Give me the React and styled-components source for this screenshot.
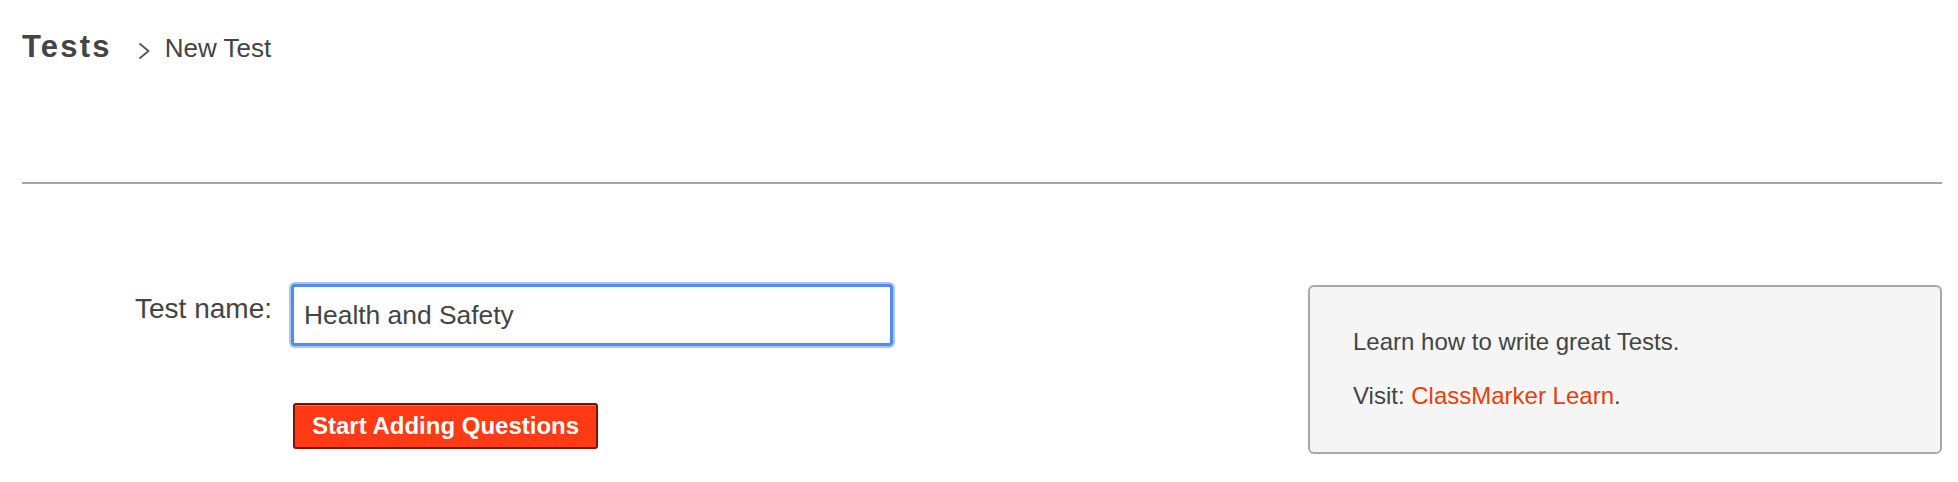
import React from "react";
import styled, { createGlobalStyle } from "styled-components";

const GlobalStyle = createGlobalStyle`
  html, body { margin: 0; padding: 0; background: #ffffff; }
  body { font-family: "Liberation Sans", Arial, Helvetica, sans-serif; color: #444444; }
`;

const Page = styled.div`
  padding: 0 16px 0 22px;
`;

const Header = styled.header`
  display: flex;
  align-items: baseline;
  padding-top: 29px;
  height: 182px;
  box-sizing: border-box;
`;

const Title = styled.h1`
  margin: 0;
  font-size: 31px;
  line-height: 36px;
  font-weight: 700;
  letter-spacing: 2.2px;
  color: #444444;
`;

const Crumb = styled.span`
  display: inline-flex;
  align-items: baseline;
  margin-left: 26px;
  font-size: 26px;
  color: #444444;
  gap: 15px;
`;

const Chevron = styled.svg`
  width: 12px;
  height: 18px;
  align-self: center;
  position: relative;
  top: 2px;
`;

const Divider = styled.hr`
  margin: 0;
  border: 0;
  height: 2px;
  background: #a6a6a6;
`;

const Main = styled.section`
  display: flex;
  justify-content: space-between;
  align-items: flex-start;
  padding-top: 100px;
`;

const Form = styled.form`
  display: grid;
  grid-template-columns: 250px 602px;
  column-gap: 19px;
  row-gap: 57px;
  margin: 0;
`;

const Label = styled.label`
  text-align: right;
  font-size: 28px;
  line-height: 30px;
  padding-top: 10px;
  color: #444444;
`;

const TextInput = styled.input`
  box-sizing: border-box;
  width: 602px;
  height: 62px;
  border: 3px solid #538be8;
  border-radius: 4px;
  box-shadow: 0 0 0 2px rgba(130, 172, 242, 0.7);
  padding: 0 10px;
  font-family: "Liberation Sans", Arial, Helvetica, sans-serif;
  font-size: 26.4px;
  color: #444444;
  background: #ffffff;
  outline: none;
`;

const Button = styled.button`
  grid-column: 2;
  justify-self: start;
  margin-left: 2px;
  box-sizing: border-box;
  height: 46px;
  padding: 0 17px;
  border: 2px solid #7c1405;
  border-radius: 3px;
  background: #ff3a14;
  box-shadow: inset 0 1px 0 rgba(255, 140, 110, 0.6);
  color: #ffffff;
  font-family: "Liberation Sans", Arial, Helvetica, sans-serif;
  font-size: 24px;
  font-weight: 700;
  cursor: pointer;
`;

const InfoBox = styled.aside`
  box-sizing: border-box;
  width: 634px;
  height: 169px;
  margin-top: 1px;
  border: 2px solid #a8a8a8;
  border-radius: 6px;
  background: #f5f5f5;
  padding: 38px 43px;
  font-size: 24px;
  line-height: 34px;
  color: #444444;
`;

const InfoText = styled.p`
  margin: 0 0 20px 0;
  &:last-child { margin-bottom: 0; }
`;

const Link = styled.a`
  color: #e8400c;
  text-decoration: none;
`;

export default function App() {
  return (
    <>
      <GlobalStyle />
      <Page>
        <Header>
          <Title>Tests</Title>
          <Crumb>
            <Chevron viewBox="0 0 12 18" aria-hidden="true">
              <path d="M1.5 1.5 L10.5 9 L1.5 16.5" fill="none" stroke="#555" strokeWidth="1.8" />
            </Chevron>
            New Test
          </Crumb>
        </Header>
        <Divider />
        <Main>
          <Form onSubmit={(e) => e.preventDefault()}>
            <Label htmlFor="testname">Test name:</Label>
            <TextInput id="testname" defaultValue="Health and Safety" />
            <Button type="submit">Start Adding Questions</Button>
          </Form>
          <InfoBox>
            <InfoText>Learn how to write great Tests.</InfoText>
            <InfoText>
              Visit: <Link href="#">ClassMarker Learn</Link>.
            </InfoText>
          </InfoBox>
        </Main>
      </Page>
    </>
  );
}
